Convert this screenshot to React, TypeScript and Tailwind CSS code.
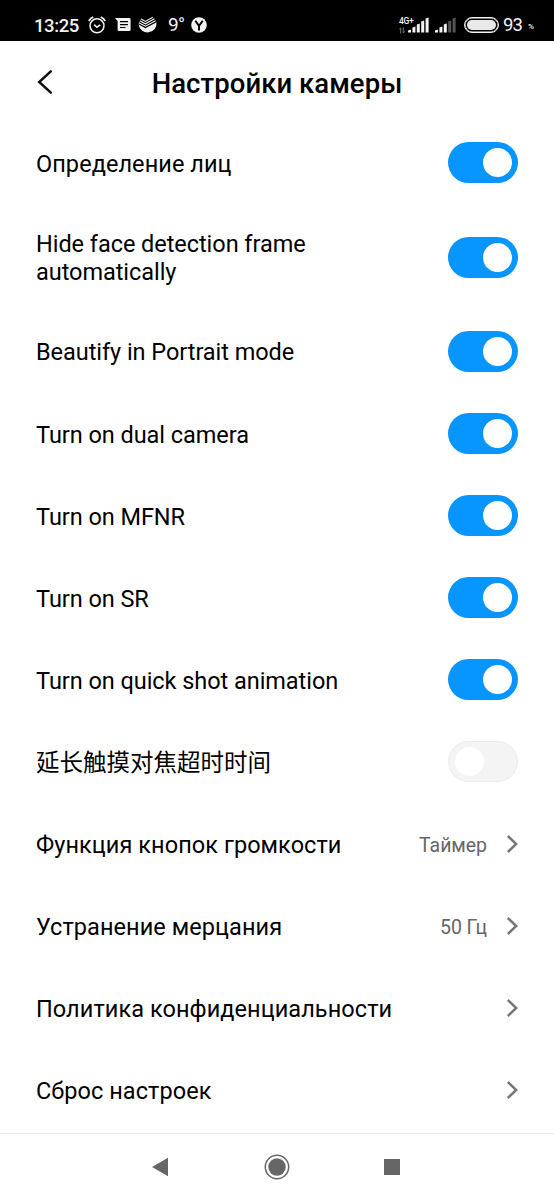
import { useState } from "react";
import clsx from "clsx";

type Row =
  | { kind: "toggle"; label: string; on: boolean; tall?: boolean }
  | { kind: "link"; label: string; value?: string };

const ROWS: Row[] = [
  { kind: "toggle", label: "Определение лиц", on: true },
  { kind: "toggle", label: "Hide face detection frame automatically", on: true, tall: true },
  { kind: "toggle", label: "Beautify in Portrait mode", on: true },
  { kind: "toggle", label: "Turn on dual camera", on: true },
  { kind: "toggle", label: "Turn on MFNR", on: true },
  { kind: "toggle", label: "Turn on SR", on: true },
  { kind: "toggle", label: "Turn on quick shot animation", on: true },
  { kind: "toggle", label: "延长触摸对焦超时时间", on: false },
  { kind: "link", label: "Функция кнопок громкости", value: "Таймер" },
  { kind: "link", label: "Устранение мерцания", value: "50 Гц" },
  { kind: "link", label: "Политика конфиденциальности" },
  { kind: "link", label: "Сброс настроек" },
];

const isCyrillic = (text: string) => /[а-я]/i.test(text);
const isLatin = (text: string) => /[a-z]/i.test(text);

const AlarmIcon = () => (
  <svg width="18" height="18" viewBox="0 0 18 18" fill="none" stroke="currentColor" strokeWidth="1.5">
    <circle cx="9" cy="9.8" r="7" />
    <path d="M.8 5a10 10 0 0 1 4.4-4M17.2 5a10 10 0 0 0-4.4-4" strokeWidth="1.8" />
    <path d="M6.2 8.6L8.9 11.2L12.2 8.8" />
  </svg>
);

const MessageIcon = () => (
  <svg width="16" height="14" viewBox="0 0 16 14">
    <path d="M0 0h14.4a1.2 1.2 0 0 1 1.2 1.2v10.6a1.2 1.2 0 0 1-1.2 1.2H3.8a1.2 1.2 0 0 1-1.2-1.2V3z" fill="currentColor" />
    <path d="M5 3.7h8M5 6.6h8M5 9.5h5.5" stroke="#000" strokeWidth="1.2" />
  </svg>
);

const SberIcon = () => (
  <svg width="20" height="19" viewBox="0 0 20 19" fill="none">
    <path d="M.6 8.5L7.4 12.2L18.5 6.3A9 9 0 1 1 .6 8.5z" fill="currentColor" />
    <path
      d="M.8 6.7L7.4 10.2L17.6 4.7M1.8 4.8L7.4 7.8L16.5 2.8M3.1 2.9L7.4 5.4L14.8 1.2"
      stroke="currentColor"
      strokeWidth="1.1"
    />
  </svg>
);

const YandexIcon = () => (
  <svg width="16" height="16" viewBox="0 0 16 16">
    <circle cx="8" cy="8" r="7.8" fill="currentColor" />
    <path d="M4.3 3.7L8 8.8L11.7 3.7M8 8.8V13.5" stroke="#000" strokeWidth="1.9" fill="none" />
  </svg>
);

const DataArrows = () => (
  <svg width="6" height="7" viewBox="0 0 6 7" fill="none" stroke="#777" strokeWidth="1">
    <path d="M1.7 6.5V.8L.3 2.4M4.2 .3V6L5.7 4.4" />
  </svg>
);

const Signal = ({ level }: { level: number }) => (
  <svg width="21" height="16" viewBox="0 0 21 16">
    {[12.5, 9.5, 6.5, 3.5, 0.5].map((top, i) => (
      <path
        key={top}
        d={`M${i * 4.4} ${top + 1}L${i * 4.4 + 3} ${top}V15.5H${i * 4.4}z`}
        fill={i < level ? "#f4f4f4" : "#555"}
      />
    ))}
  </svg>
);

const StatusBar = () => (
  <div className="flex h-[41px] items-center bg-black pt-[9px] pr-5 pl-[34px] text-[#f2f2f2]">
    <span className="w-[54px] pt-px text-[18.5px] leading-5 font-medium tracking-[-0.4px]">13:25</span>
    <AlarmIcon />
    <span className="ml-[9px]">
      <MessageIcon />
    </span>
    <span className="ml-[7px]">
      <SberIcon />
    </span>
    <span className="ml-2.5 w-[23px] text-[19px] leading-5 tracking-[-0.6px]">9°</span>
    <YandexIcon />

    <div className="ml-auto flex items-center">
      <div className="flex w-[15px] flex-col">
        <span className="text-[8.5px] leading-[8px] font-medium tracking-[-0.3px]">4G+</span>
        <span className="mt-0.5">
          <DataArrows />
        </span>
      </div>
      <span className="-ml-[6px]">
        <Signal level={5} />
      </span>
      <span className="ml-1.5">
        <Signal level={3} />
      </span>
      <div className="ml-2 h-4 w-[35px] rounded-full border border-[#f2f2f2] p-[2px] ring-[0.5px] ring-[#f2f2f2] ring-inset">
        <div className="h-full rounded-full bg-[#e9e9e9]" />
      </div>
      <span className="ml-1 w-[25px] text-[18.5px] leading-5 tracking-[-1px]">93</span>
      <span className="mt-1 w-1.5 text-[8px] leading-3 font-medium">%</span>
    </div>
  </div>
);

const Toggle = ({ on, onChange, label }: { on: boolean; onChange: () => void; label: string }) => (
  <button
    role="switch"
    aria-checked={on}
    aria-label={label}
    onClick={onChange}
    className={clsx(
      "flex h-[41px] w-[70px] shrink-0 items-center rounded-full px-[6px]",
      on ? "justify-end bg-[#0795ff]" : "justify-start border border-[#ebebeb] bg-[#f4f4f4]",
    )}
  >
    <span className="size-[29px] rounded-full bg-white" />
  </button>
);

const Chevron = () => (
  <svg width="12" height="20" viewBox="0 0 12 20" fill="none" stroke="#777" strokeWidth="2.5">
    <path d="M1.8 2L10.3 10L1.8 18" />
  </svg>
);

export default function App() {
  const [rows, setRows] = useState(ROWS);

  const toggle = (index: number) =>
    setRows((prev) => prev.map((r, i) => (i === index && r.kind === "toggle" ? { ...r, on: !r.on } : r)));

  return (
    <div className="flex h-[1200px] w-[554px] flex-col overflow-hidden bg-white font-[Roboto,'Noto_Sans_CJK_SC',sans-serif] text-black">
      <StatusBar />

      <header className="flex h-[81px] items-center px-9">
        <button aria-label="Назад" className="w-[18px]">
          <svg width="18" height="26" viewBox="0 0 18 26" fill="none" stroke="#111" strokeWidth="2.5" strokeLinecap="round">
            <path d="M14.8 2.3L3.2 13L14.8 23.7" />
          </svg>
        </button>
        <h1 className="mr-[18px] grow pt-1 text-center text-[27.5px] leading-8 font-medium tracking-[0.05px]">
          Настройки камеры
        </h1>
      </header>

      <main className="grow">
        {rows.map((row, i) => (
          <div
            key={row.label}
            className={clsx(
              "flex items-center justify-between px-9",
              row.kind === "toggle" && row.tall ? "h-[106px]" : "h-[82px]",
              row.kind === "link" && "pt-0.5",
              i === 0 && "pb-px",
            )}
          >
            <span
              className={clsx(
                "max-w-[360px] text-[23.5px] leading-7",
                row.kind === "toggle" && (row.tall ? "w-[300px] pt-0.5" : i < 3 ? "pt-0.5" : "pt-[3px]"),
                row.kind === "link" && "pt-0.5",
                isCyrillic(row.label) && "tracking-[0.07px]",
                isLatin(row.label) && "tracking-[-0.05px]",
              )}
            >
              {row.label}
            </span>
            {row.kind === "toggle" ? (
              <Toggle on={row.on} label={row.label} onChange={() => toggle(i)} />
            ) : (
              <span className="flex items-center">
                {row.value && (
                  <span className="mr-[19px] pt-[3px] text-[19.5px] tracking-[-0.04px] text-[#666]">{row.value}</span>
                )}
                <Chevron />
              </span>
            )}
          </div>
        ))}
      </main>

      {/* System navigation */}
      <nav className="flex h-[67px] items-center justify-between border-t border-[#e8e8e8] pr-[154px] pl-[151px]">
        <svg width="18" height="20" viewBox="0 0 18 20" fill="#666">
          <path d="M1 10L17 .8V19.2z" />
        </svg>
        <svg width="26" height="26" viewBox="0 0 26 26">
          <circle cx="13" cy="13" r="11.7" fill="none" stroke="#666" strokeWidth="1.5" />
          <circle cx="13" cy="13" r="8.7" fill="#666" />
        </svg>
        <div className="mb-px size-4 bg-[#666]" />
      </nav>
    </div>
  );
}
